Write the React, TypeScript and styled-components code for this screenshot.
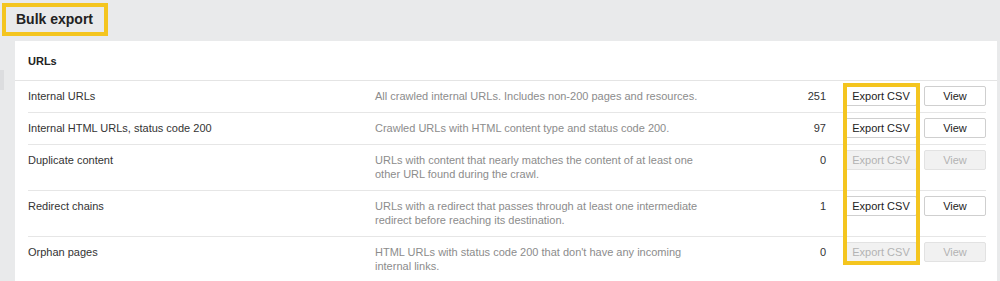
import React from "react";
import styled, { createGlobalStyle } from "styled-components";

const GlobalStyle = createGlobalStyle`
  html, body {
    margin: 0;
    padding: 0;
    background: #e9eaeb;
    font-family: "Liberation Sans", Arial, Helvetica, sans-serif;
  }
  * { box-sizing: border-box; }
`;

const Page = styled.div`
  height: 281px;
  overflow: hidden;
  padding-top: 3px;
`;

const TitleBox = styled.h1`
  margin: 0 0 0 2px;
  width: 106px;
  height: 33px;
  border: 4px solid #f4c51f;
  padding-left: 10px;
  font-size: 14px;
  line-height: 25px;
  font-weight: bold;
  color: #222;
`;

const Body = styled.div`
  display: flex;
  margin-top: 5px;
`;

const Gutter = styled.div`
  width: 15px;
  flex: none;
`;

const Tab = styled.div`
  width: 4px;
  height: 20px;
  margin-top: 29px;
  background: #dcdddf;
`;

const Card = styled.section`
  position: relative;
  flex: 1;
  margin-right: 3px;
  background: #fff;
`;

const CardHeader = styled.div`
  height: 40px;
  padding: 0 13px;
  display: flex;
  align-items: center;
  border-bottom: 1px solid #e4e4e4;
  font-size: 11px;
  font-weight: bold;
  color: #222;
`;

const List = styled.div`
  padding: 0 11px 0 13px;
`;

const Row = styled.div`
  display: grid;
  grid-template-columns: 347px 325px 1fr 72px 69px;
  align-items: start;
  padding: 5px 0 6px;
  border-bottom: 1px solid #e6e6e6;
  font-size: 11px;
  line-height: 14px;
`;

const Name = styled.div`
  padding: 3px 0;
  color: #333;
`;

const Desc = styled.div`
  padding: 3px 0;
  color: #8c8c8c;
`;

const Count = styled.div`
  padding: 3px 19px 3px 0;
  text-align: right;
  color: #333;
`;

const Button = styled.button<{ $disabled?: boolean; $width: number }>`
  justify-self: end;
  width: ${(p) => p.$width}px;
  height: 20px;
  margin: 0;
  padding: 0;
  border: 1px solid ${(p) => (p.$disabled ? "#e2e2e2" : "#cfcfcf")};
  border-radius: 2px;
  background: ${(p) => (p.$disabled ? "#f1f1f1" : "#fff")};
  color: ${(p) => (p.$disabled ? "#b3b3b3" : "#222")};
  font-family: inherit;
  font-size: 11px;
  line-height: 18px;
  text-align: center;
  cursor: ${(p) => (p.$disabled ? "default" : "pointer")};
`;

const Highlight = styled.div`
  position: absolute;
  left: 828px;
  top: 42px;
  width: 77px;
  height: 182px;
  border: 4px solid #f4c51f;
  pointer-events: none;
`;

type Item = { name: string; desc: string; count: number };

const items: Item[] = [
  {
    name: "Internal URLs",
    desc: "All crawled internal URLs. Includes non-200 pages and resources.",
    count: 251,
  },
  {
    name: "Internal HTML URLs, status code 200",
    desc: "Crawled URLs with HTML content type and status code 200.",
    count: 97,
  },
  {
    name: "Duplicate content",
    desc: "URLs with content that nearly matches the content of at least one other URL found during the crawl.",
    count: 0,
  },
  {
    name: "Redirect chains",
    desc: "URLs with a redirect that passes through at least one intermediate redirect before reaching its destination.",
    count: 1,
  },
  {
    name: "Orphan pages",
    desc: "HTML URLs with status code 200 that don't have any incoming internal links.",
    count: 0,
  },
];

export default function App() {
  return (
    <Page>
      <GlobalStyle />
      <TitleBox>Bulk export</TitleBox>
      <Body>
        <Gutter>
          <Tab />
        </Gutter>
        <Card>
          <CardHeader>URLs</CardHeader>
          <List>
            {items.map((it) => {
              const off = it.count === 0;
              return (
                <Row key={it.name}>
                  <Name>{it.name}</Name>
                  <Desc>{it.desc}</Desc>
                  <Count>{it.count}</Count>
                  <Button $disabled={off} disabled={off} $width={72}>
                    Export CSV
                  </Button>
                  <Button $disabled={off} disabled={off} $width={62}>
                    View
                  </Button>
                </Row>
              );
            })}
          </List>
          <Highlight />
        </Card>
      </Body>
    </Page>
  );
}
